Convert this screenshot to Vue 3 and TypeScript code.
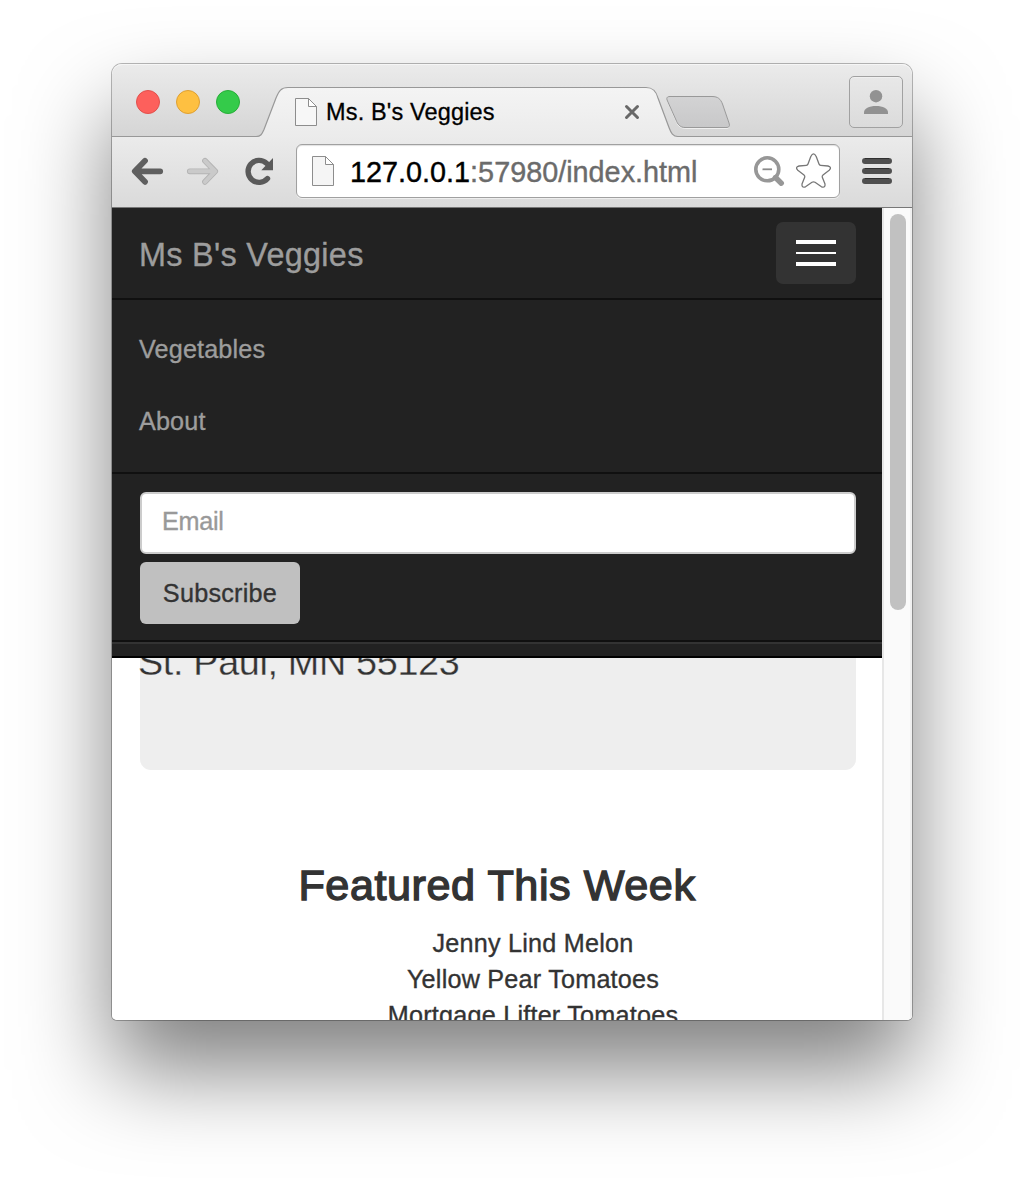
<script setup lang="ts">
const lights: string[] = ['close', 'minimize', 'zoom']
const links: string[] = ['Vegetables', 'About']
const featured: string[] = ['Jenny Lind Melon', 'Yellow Pear Tomatoes', 'Mortgage Lifter Tomatoes']
</script>

<template>
  <div class="desktop">
    <div class="window">
      <header class="tabstrip">
        <div class="lights">
          <span v-for="l in lights" :key="l" class="light" :class="l"></span>
        </div>
        <div class="tab">
          <svg class="tab-shape" viewBox="256 84 422 54" width="422" height="54">
            <defs>
              <linearGradient id="tabFill" x1="0" y1="0" x2="0" y2="1">
                <stop offset="0" stop-color="#f4f4f4" />
                <stop offset="1" stop-color="#ebebeb" />
              </linearGradient>
            </defs>
            <path d="M256 138V136.500C261 136.500 262 134 264 129.500L276 98C279 91 281 87.500 288 87.500H646C653 87.500 656 91 658 98L669 127.500C671 133 673 136.500 678 136.500V138Z" fill="url(#tabFill)" />
            <path d="M256 136.500C261 136.500 262 134 264 129.500L276 98C279 91 281 87.500 288 87.500H646C653 87.500 656 91 658 98L669 127.500C671 133 673 136.500 678 136.500" fill="none" stroke="#989898" stroke-width="1.200" />
          </svg>
          <svg class="page-icon" viewBox="0 0 24 30" width="24" height="30">
            <path d="M1.500 1.500H14.500L22.500 9.500V28.500H1.500Z" fill="#f7f7f7" stroke="#8d8d8d" />
            <path d="M14.500 1.500V9.500H22.500Z" fill="#fff" stroke="#8d8d8d" stroke-linejoin="round" />
          </svg>
          <span class="tab-title">Ms. B's Veggies</span>
          <svg class="tab-close" viewBox="0 0 16 16" width="16" height="16">
            <path d="M2.500 2.500L13.500 13.500M13.500 2.500L2.500 13.500" stroke="#686868" stroke-width="3" stroke-linecap="round" />
          </svg>
        </div>
        <svg class="new-tab" viewBox="664 94 68 36" width="68" height="36">
          <defs>
            <linearGradient id="newTabFill" x1="0" y1="0" x2="0" y2="1">
              <stop offset="0" stop-color="#d3d3d4" />
              <stop offset="1" stop-color="#c8c8c9" />
            </linearGradient>
          </defs>
          <path d="M670 97.500H712C717 97.500 720 99 722 104L729 124C730 127 729 128.500 726 128.500H687C680 128.500 678 126 676 121L667.500 101C666.500 98.500 667 97.500 670 97.500Z" fill="none" stroke="#fff" stroke-opacity=".6" />
          <path d="M670 96.500H712C718 96.500 720.500 99 722.500 104L729 123C730 126 729.500 127.500 726 127.500H685C680 127.500 677.500 124 676 120L667.500 101C666 98 667 96.500 670 96.500Z" fill="url(#newTabFill)" stroke="#999" />
        </svg>
        <div class="user">
          <svg viewBox="0 0 26 26" width="26" height="26">
            <circle cx="13" cy="7.200" r="6.200" fill="#929292" />
            <path d="M1 25V23.500C1 19.500 6 17 13 17S25 19.500 25 23.500V25Z" fill="#929292" />
          </svg>
        </div>
      </header>

      <div class="toolbar">
        <svg class="back" viewBox="130 156 36 32" width="36" height="32">
          <path d="M145 160.800L134.800 171.300L145 181.800M135.500 171.300H160.200" fill="none" stroke="#5f5f5f" stroke-width="5.800" stroke-linecap="round" stroke-linejoin="round" />
        </svg>
        <svg class="forward" viewBox="184 156 36 32" width="36" height="32">
          <path d="M205 160.800L215.200 171.300L205 181.800M214.500 171.300H189.800" fill="none" stroke="#b4b4b4" stroke-width="5.800" stroke-linecap="round" stroke-linejoin="round" />
          <path d="M205 160.800L215.200 171.300L205 181.800M214.500 171.300H189.800" fill="none" stroke="#cacaca" stroke-width="4" stroke-linecap="round" stroke-linejoin="round" />
        </svg>
        <svg class="reload" viewBox="244 156 32 32" width="32" height="32">
          <path d="M267.500 178.500A11 11 0 1 1 266.500 163.200" fill="none" stroke="#5a5a5a" stroke-width="5.400" stroke-linecap="round" />
          <path d="M273 158V170.300H261.300Z" fill="#5a5a5a" />
        </svg>
        <div class="omnibox">
          <svg class="page-icon" viewBox="0 0 24 32" width="24" height="32">
            <path d="M1.500 1.500H14.500L22.500 9.500V30.500H1.500Z" fill="#f5f5f5" stroke="#8d8d8d" />
            <path d="M14.500 1.500V9.500H22.500Z" fill="#fff" stroke="#8d8d8d" stroke-linejoin="round" />
          </svg>
          <span class="url">127.0.0.1<span class="rest">:57980/index.html</span></span>
          <svg class="zoom-icon" viewBox="752 154 34 34" width="34" height="34">
            <circle cx="767.300" cy="169.300" r="11.500" fill="none" stroke="#979797" stroke-width="3.600" />
            <path d="M762.500 169.300H772" stroke="#8a8a8a" stroke-width="1.800" />
            <path d="M775.500 177.500L781.300 183.200" stroke="#979797" stroke-width="5.400" stroke-linecap="round" />
          </svg>
          <svg class="star" viewBox="794 151 40 40" width="40" height="40">
            <path d="M810.800 156.500Q813.500 151.200 816.200 156.500L819 164Q819.400 165.200 820.600 165.300L828 166Q832.300 167.200 829.200 170.300L823 175Q821.800 176 822.300 177.300L825 184Q825.500 188.300 821.500 186.800L815 182.300Q813.500 181.300 812 182.300L805.500 186.800Q801.500 188.300 802 184L804.700 177.300Q805.200 176 804 175L797.800 170.300Q794.700 167.200 799 166L806.400 165.300Q807.600 165.200 808 164Z" fill="#fff" stroke="#777" stroke-width="1.300" stroke-linejoin="round" />
          </svg>
        </div>
        <svg class="menu" viewBox="862 156 30 30" width="30" height="30">
          <path d="M865 161H889M865 171H889M865 181H889" stroke="#4f4f4f" stroke-width="6" stroke-linecap="round" />
          <path d="M865 158.500H889M865 168.500H889M865 178.500H889" stroke="#303030" stroke-width="1" />
        </svg>
      </div>

      <main class="viewport">
        <div class="page">
          <nav class="navbar">
            <div class="nav-header">
              <a class="brand">Ms B's Veggies</a>
              <button class="toggle" aria-label="Toggle navigation">
                <i></i><i class="thin"></i><i></i>
              </button>
            </div>
            <ul class="nav-links">
              <li v-for="link in links" :key="link">{{ link }}</li>
            </ul>
            <form class="subscribe" @submit.prevent>
              <input type="email" placeholder="Email" />
              <button type="submit">Subscribe</button>
            </form>
            <div class="nav-end"></div>
          </nav>
          <section class="jumbotron">
            <p>St. Paul, MN 55123</p>
          </section>
          <section class="featured">
            <h3>Featured This Week</h3>
            <ul>
              <li v-for="item in featured" :key="item">{{ item }}</li>
            </ul>
          </section>
        </div>
        <div class="scrollbar"><div class="thumb"></div></div>
      </main>
    </div>
  </div>
</template>

<style>
body { background: #fff; }
</style>

<style scoped>
* { box-sizing: border-box; }
ul, p, h3 { margin: 0; padding: 0; list-style: none; }
svg { display: block; flex: none; }
.desktop {
  width: 1024px;
  height: 1180px;
  padding: 64px 112px;
  overflow: hidden;
  background: #fff;
  font-family: "Liberation Sans", Arial, sans-serif;
}
.window {
  width: 800px;
  height: 956px;
  border-radius: 10px 10px 5px 5px;
  box-shadow: 0 0 0 1px rgba(0, 0, 0, .27), 0 50px 90px rgba(0, 0, 0, .5);
  display: flex;
  flex-direction: column;
}
.tabstrip {
  height: 73px;
  display: flex;
  align-items: flex-start;
  padding-left: 24px;
  border-radius: 10px 10px 0 0;
  background: linear-gradient(#ebebeb, #d5d5d5);
  border-bottom: 1px solid #989898;
  box-shadow: inset 0 1px 0 #f6f6f6;
}
.lights { display: flex; gap: 16px; padding-top: 26px; width: 104px; }
.light { width: 24px; height: 24px; border-radius: 50%; border: 1px solid; }
.close { background: #fd605c; border-color: #e2504c; }
.minimize { background: #fec041; border-color: #dfa032; }
.zoom { background: #34cb4a; border-color: #27ae38; }
.tab {
  position: relative;
  width: 422px;
  height: 54px;
  margin: 20px 0 0 16px;
  padding: 13px 30px 0 38px;
  display: flex;
  flex: none;
}
.tab-shape { position: absolute; left: 0; top: 0; }
.tab .page-icon, .tab-title, .tab-close { position: relative; }
.tab-title {
  margin: 0 0 0 8px;
  width: 290px;
  font-size: 23.5px;
  line-height: 30px;
  letter-spacing: .15px;
  color: #000;
  -webkit-text-stroke: .3px #000;
  white-space: nowrap;
}
.tab-close { margin: 7px 0 0 8px; }
.new-tab { margin: 30px 0 0 -14px; }
.user {
  width: 54px;
  height: 52px;
  margin: 12px 9px 0 auto;
  border: 1px solid #a1a1a1;
  border-radius: 5px;
  display: flex;
  justify-content: center;
  padding-top: 12px;
  box-shadow: inset 0 1px 0 #efefef;
  background: linear-gradient(#e8e8e8, #dbdbdb);
}
.toolbar {
  height: 71px;
  flex: none;
  display: flex;
  align-items: flex-start;
  padding: 19px 20px 0 18px;
  background: linear-gradient(#ebebeb, #dadada);
  border-bottom: 1px solid #777;
}
.forward { margin-left: 18px; }
.reload { margin-left: 24px; }
.omnibox {
  width: 544px;
  height: 54px;
  margin: -12px 22px 0 20px;
  padding-left: 14px;
  display: flex;
  align-items: center;
  background: #fff;
  border: 1px solid #a0a0a0;
  border-radius: 6px;
  box-shadow: inset 0 1px 1px rgba(0, 0, 0, .12), 0 1px 0 rgba(255, 255, 255, .5);
}
.url {
  width: 403px;
  margin-left: 15px;
  padding-top: 2px;
  font-size: 28.8px;
  color: #000;
  -webkit-text-stroke: .4px currentColor;
  white-space: nowrap;
}
.rest { color: #6b6b6b; }
.zoom-icon { margin-left: -1px; }
.star { margin-left: 8px; }
.viewport { flex: 1; min-height: 0; display: flex; border-radius: 0 0 5px 5px; overflow: hidden; background: #fff; }
.page {
  width: 770px;
  overflow: hidden;
  color: #333;
  font-size: 25.2px;
  -webkit-text-stroke: .35px currentColor;
}
.navbar { position: relative; z-index: 1; height: 450px; background: #222; border-bottom: 2px solid #000; color: #9d9d9d; }
.nav-header { height: 90px; display: flex; justify-content: space-between; padding: 14px 26px 0 27px; }
.brand { font-size: 32.4px; line-height: 66px; letter-spacing: .3px; }
.toggle {
  width: 80px;
  height: 62px;
  border: 0;
  border-radius: 7px;
  padding: 18px 20px;
  background: #333;
  display: flex;
  flex-direction: column;
  justify-content: space-between;
}
.toggle i { display: block; width: 40px; height: 4px; background: #fff; }
.toggle .thin { height: 2px; }
.nav-links { border-top: 2px solid #101010; height: 174px; padding: 13px 27px; letter-spacing: .15px; }
.nav-links li { height: 72px; line-height: 72px; }
.subscribe {
  height: 170px;
  border-top: 2px solid #101010;
  border-bottom: 2px solid #101010;
  padding: 18px 26px 0 28px;
  display: flex;
  flex-direction: column;
  align-items: flex-start;
  gap: 8px;
}
.subscribe input {
  width: 100%;
  height: 62px;
  border: 2px solid #ccc;
  border-radius: 6px;
  padding: 0 20px 4px;
  font: inherit;
  letter-spacing: -.3px;
  background: #fff;
}
.subscribe input::placeholder { color: #999; opacity: 1; -webkit-text-stroke: .35px #999; }
.subscribe button {
  width: 160px;
  height: 62px;
  border: 0;
  border-radius: 6px;
  padding: 0;
  font: inherit;
  letter-spacing: .25px;
  color: #333;
  background: #c0c0c0;
}
.nav-end { border-top: 2px solid #333; }
.jumbotron { width: 716px; height: 130px; margin: -18px 0 0 28px; background: #eee; border-radius: 0 0 11px 11px; }
.jumbotron p {
  margin-left: -2px;
  font-size: 37.8px;
  line-height: 44px;
  letter-spacing: -.35px;
  -webkit-text-stroke: .3px #eee;
}
.featured { padding: 89px 0 0; }
.featured h3 {
  text-align: center;
  font-size: 43.2px;
  line-height: 52px;
  font-weight: 400;
  letter-spacing: .55px;
  -webkit-text-stroke: 1.4px #333;
}
.featured ul { padding: 14px 0 0 72px; text-align: center; letter-spacing: .22px; }
.featured li { height: 36px; line-height: 36px; white-space: nowrap; }
.scrollbar {
  width: 30px;
  background: #fafafa;
  border-left: 2px solid #e7e7e7;
  border-right: 2px solid #f0f0f0;
  padding: 6px 0 0 6px;
}
.thumb { width: 16px; height: 396px; border-radius: 8px; background: #c1c1c1; }
</style>
